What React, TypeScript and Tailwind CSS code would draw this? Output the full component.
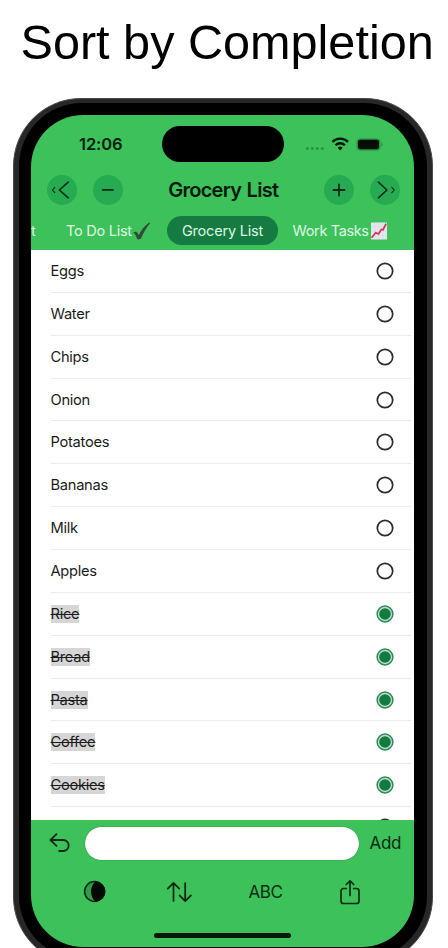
import React from "react";

const items = [
  { name: "Eggs", done: false },
  { name: "Water", done: false },
  { name: "Chips", done: false },
  { name: "Onion", done: false },
  { name: "Potatoes", done: false },
  { name: "Bananas", done: false },
  { name: "Milk", done: false },
  { name: "Apples", done: false },
  { name: "Rice", done: true },
  { name: "Bread", done: true },
  { name: "Pasta", done: true },
  { name: "Coffee", done: true },
  { name: "Cookies", done: true },
];

function OpenCircle() {
  return (
    <svg width="18" height="18" viewBox="0 0 18 18" fill="none" className="shrink-0">
      <circle cx="9" cy="9" r="7.7" stroke="#2e2b2e" strokeWidth="1.7" />
    </svg>
  );
}

function DoneCircle() {
  return (
    <svg width="18" height="18" viewBox="0 0 18 18" fill="none" className="shrink-0">
      <circle cx="9" cy="9" r="7.9" fill="#b5e3c6" stroke="#2f8a57" strokeWidth="1.5" />
      <circle cx="9" cy="9" r="5.8" fill="#147a42" />
    </svg>
  );
}

function RoundButton({ children }: { children: React.ReactNode }) {
  return (
    <button className="flex h-[30px] w-[30px] shrink-0 items-center justify-center rounded-full bg-[#26aa52]">
      <svg width="30" height="30" viewBox="0 0 30 30" fill="none" stroke="#082c14" strokeWidth="1.6" strokeLinecap="round" strokeLinejoin="round">
        {children}
      </svg>
    </button>
  );
}

function StatusBar() {
  return (
    <div className="flex h-[58px] shrink-0 items-center pl-[48px] pr-[31px]">
      <span className="w-[82.5px] text-[16.5px] font-semibold tracking-[-0.1px] text-[#06200d]">12:06</span>
      <div className="h-[36px] w-[122.5px] shrink-0 rounded-full bg-black" />
      <svg className="ml-[21px] shrink-0" width="78" height="18" viewBox="0 0 78 18">
        <g fill="#279244">
          <circle cx="2.3" cy="13.5" r="1.5" />
          <circle cx="7.3" cy="13.5" r="1.5" />
          <circle cx="12.3" cy="13.5" r="1.5" />
          <circle cx="17.3" cy="13.5" r="1.5" />
        </g>
        <g fill="none" stroke="#03170a" strokeWidth="2.3">
          <path d="M27.4 6.9a10.900 10.900 0 0 1 15.600 0" />
          <path d="M30.500 10.200a6.700 6.700 0 0 1 9.400 0" />
        </g>
        <path d="M35.2 15.400l-2.500-2.600a3.500 3.500 0 0 1 5 0z" fill="#03170a" />
        <rect x="51.5" y="3.4" width="24" height="12.2" rx="3.8" fill="#279244" />
        <rect x="53" y="4.8" width="21" height="9.4" rx="2.4" fill="#020e05" />
        <path d="M76.3 7.7v3.9c1.8-.7 1.8-3.2 0-3.9z" fill="#279244" />
      </svg>
    </div>
  );
}

function Header() {
  return (
    <div className="flex h-[34px] shrink-0 items-center pl-[16px] pr-[14.5px]">
      <RoundButton>
        <path d="M21.2 7.200l-8.800 7.800 8.800 7.800" />
        <path d="M7.800 12.300L5.400 15l2.400 2.700" strokeWidth="1.1" />
      </RoundButton>
      <div className="w-[16px] shrink-0" />
      <RoundButton>
        <path d="M9.7 14.9h10.2" strokeWidth="1.9" />
      </RoundButton>
      <h1 className="grow whitespace-nowrap text-center text-[20px] font-semibold tracking-[-0.72px] text-[#04180a] [word-spacing:1px]">
        Grocery List
      </h1>
      <RoundButton>
        <path d="M9.500 15h11M15 9.500v11" strokeWidth="1.8" />
      </RoundButton>
      <div className="w-[16px] shrink-0" />
      <RoundButton>
        <path d="M8.400 7.200l8.600 7.800-8.600 7.800" />
        <path d="M21.800 12.300l2.400 2.700-2.400 2.700" strokeWidth="1.1" />
      </RoundButton>
    </div>
  );
}

function Tabs() {
  return (
    <div className="flex h-[43px] shrink-0 items-center whitespace-nowrap pt-[4px] text-[14.500px] text-[#ddf8e3]">
      <span className="w-[35px] shrink-0">t</span>
      <div className="flex w-[101px] shrink-0 items-center">
        <span className="w-[66px] tracking-[-0.25px]">To Do List</span>
        <svg width="19" height="20" viewBox="0 0 19 20" className="shrink-0">
          <path d="M1.2 11.7c1-1 2.4-1.500 3.500-.6 1 .8 1.500 2.100 2 3.200C8.900 9.600 12.600 4.500 17 1.700c.8-.2 1.400.2.9.9-3.800 4.300-6.700 9.700-8.900 15-.6 1-3.600 1.200-4 0-.8-2.200-1.700-4.800-3.800-5.900z" fill="#37493b" />
        </svg>
      </div>
      <div className="flex h-[29px] w-[111px] shrink-0 items-center justify-center rounded-full bg-[#167b42] tracking-[-0.2px]">Grocery List</div>
      <span className="ml-[14.500px] w-[77.500px] shrink-0 tracking-[-0.35px]">Work Tasks</span>
      <svg width="18" height="18" viewBox="0 0 18 18" className="shrink-0">
        <rect x="1" y=".5" width="16" height="17" fill="#e6e6f0" />
        <path d="M4.700.5v17M8.700.5v17M12.700.5v17M1 4.700h16M1 9h16M1 13.300h16" stroke="#d3d7e4" strokeWidth=".5" />
        <path d="M1.600 15.800l4-5 3 1.100 2.800-4.500 1.700.3 3-6" fill="none" stroke="#cf3851" strokeWidth="1.700" />
      </svg>
    </div>
  );
}

function List() {
  return (
    <div className="h-[570px] shrink-0 overflow-hidden bg-white">
      <ul>
        {items.map((item) => (
          <li key={item.name} className="flex h-[42.86px] items-stretch pl-[19.5px] pr-[3px]">
            <div className="flex grow items-center justify-between border-b border-[#ececec] pr-[17px]">
              <span
                className={
                  item.done
                    ? "bg-[#d6d6d6] text-[14.7px] leading-[18px] tracking-[-0.3px] text-[#1c1c1c] line-through decoration-[1.3px]"
                    : "text-[14.7px] leading-[18px] tracking-[-0.3px] text-[#1c1c1c]"
                }
              >
                {item.name}
              </span>
              {item.done ? <DoneCircle /> : <OpenCircle />}
            </div>
          </li>
        ))}
        <li className="flex h-[42.900px] justify-end pr-[20px] pt-[11px]">
          <OpenCircle />
        </li>
      </ul>
    </div>
  );
}

function Footer() {
  return (
    <div className="flex grow flex-col">
      <div className="flex h-[46px] shrink-0 items-center pl-[18px]">
        <svg width="22" height="22" viewBox="0 0 22 22" fill="none" stroke="#082c14" strokeWidth="1.800" strokeLinecap="round" strokeLinejoin="round" className="shrink-0">
          <path d="M7.500 2.200L1.500 8 7.500 13.800M1.500 8h12.700a5.500 5.500 0 0 1 0 11h-4" />
        </svg>
        <div className="ml-[14px] h-[33px] w-[274px] shrink-0 rounded-full bg-white shadow-[0_0_1px_#1d5a2d]" />
        <span className="ml-[10.500px] pt-[1px] text-[17px] tracking-[-0.3px] text-[#082c14]">Add</span>
      </div>
      <div className="flex h-[51px] shrink-0 items-center pl-[52px]">
        <svg width="23" height="23" viewBox="0 0 23 23" className="shrink-0">
          <circle cx="11.500" cy="11.500" r="9.900" fill="#2f9c49" stroke="#062610" strokeWidth="1.500" />
          <path d="M12.500 1.500a10 10 0 0 1 0 20c-6-4.800-6-15.200 0-20z" fill="#010903" />
        </svg>
        <svg width="26" height="22" viewBox="0 0 26 22" fill="none" stroke="#062610" strokeWidth="1.700" strokeLinecap="round" strokeLinejoin="round" className="ml-[60px] shrink-0">
          <path d="M7.500 20V2M1.800 7.700L7.500 1.800l5.700 5.900M19.200 2v18M13.500 14.300l5.700 5.900 5.700-5.900" />
        </svg>
        <span className="ml-[56.500px] w-[35px] pt-[2px] text-[17px] tracking-[-0.4px] text-[#082c14]">ABC</span>
        <svg width="22" height="26" viewBox="0 0 22 26" fill="none" stroke="#082c14" strokeWidth="1.700" strokeLinecap="round" strokeLinejoin="round" className="ml-[55px] shrink-0">
          <path d="M7.300 9.500H4.500a2.500 2.500 0 0 0-2.500 2.500v10a2.500 2.500 0 0 0 2.500 2.500h13a2.500 2.500 0 0 0 2.500-2.500V12a2.500 2.500 0 0 0-2.500-2.500h-2.800M11 16.500V2M7.300 5.500L11 1.800l3.700 3.700" />
        </svg>
      </div>
      <div className="mt-[16px] flex justify-center">
        <div className="h-[5px] w-[137px] rounded-full bg-[#06190b]" />
      </div>
    </div>
  );
}

export default function App() {
  return (
    <main className="h-[948px] w-[448px] overflow-hidden bg-white font-['Inter','Liberation_Sans',sans-serif]">
      <div className="flex h-[97.500px] items-center whitespace-nowrap pb-[12.500px] pl-[20.500px] font-['Liberation_Sans',Arial,sans-serif] text-[48.600px] leading-none text-black">
        Sort by Completion
      </div>
      <div className="ml-[12.500px] h-[867px] w-[420px] rounded-[68px] border border-[#4a4a4b] bg-[#272728] px-[5px] pb-[5px] pt-[4px]">
        <div className="h-full rounded-[63px] bg-black px-[12.500px] pb-[12px] pt-[12.500px]">
          <div className="flex h-full flex-col overflow-hidden rounded-[52px] bg-[#3dc15a]">
            <StatusBar />
            <Header />
            <Tabs />
            <List />
            <Footer />
          </div>
        </div>
      </div>
    </main>
  );
}
